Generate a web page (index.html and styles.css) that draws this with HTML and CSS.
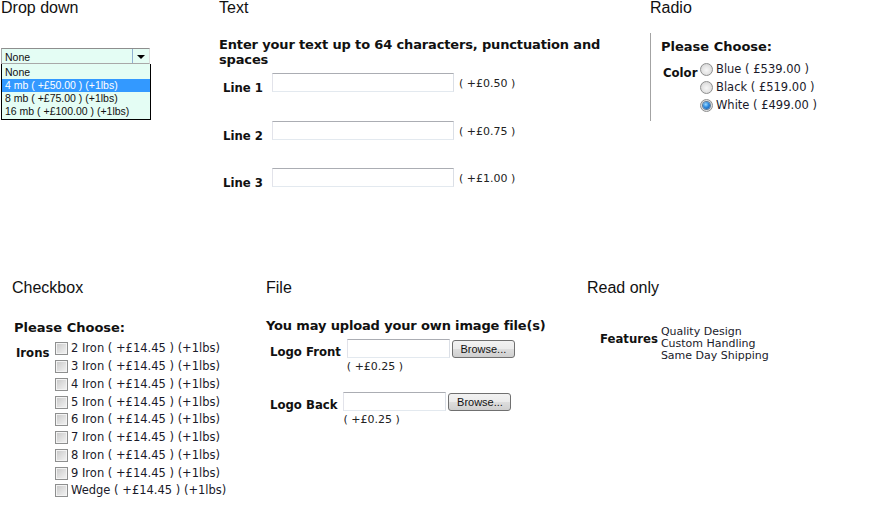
FILE: index.html
```html
<!DOCTYPE html>
<html lang="en">
<head>
<meta charset="utf-8">
<title>Product options</title>
<link rel="stylesheet" href="styles.css">
</head>
<body>
<div class="page">
  <div class="row row-top">
    <section class="col col-dd">
      <h2 class="title">Drop down</h2>
      <div class="select">
        <span class="select-value">None</span>
        <span class="select-btn"><span class="caret"></span></span>
      </div>
      <ul class="listbox">
        <li>None</li>
        <li class="active">4 mb ( +£50.00 ) (+1lbs)</li>
        <li>8 mb ( +£75.00 ) (+1lbs)</li>
        <li>16 mb ( +£100.00 ) (+1lbs)</li>
      </ul>
    </section>

    <section class="col col-text">
      <h2 class="title">Text</h2>
      <p class="intro">Enter your text up to 64 characters, punctuation and spaces</p>
      <div class="lines">
        <div class="line-row"><label class="lbl lbl-line">Line 1</label><input class="tin" type="text"><span class="price">( +£0.50 )</span></div>
        <div class="line-row"><label class="lbl lbl-line">Line 2</label><input class="tin" type="text"><span class="price">( +£0.75 )</span></div>
        <div class="line-row"><label class="lbl lbl-line">Line 3</label><input class="tin" type="text"><span class="price">( +£1.00 )</span></div>
      </div>
    </section>

    <section class="col col-radio">
      <h2 class="title">Radio</h2>
      <div class="radio-box">
        <p class="choose">Please Choose:</p>
        <div class="opt-field">
          <span class="lbl lbl-color">Color</span>
          <div class="opt-list">
            <div class="opt"><span class="radio"></span>Blue ( £539.00 )</div>
            <div class="opt"><span class="radio"></span>Black ( £519.00 )</div>
            <div class="opt"><span class="radio checked"></span>White ( £499.00 )</div>
          </div>
        </div>
      </div>
    </section>
  </div>

  <div class="row row-bottom">
    <section class="col col-check">
      <h2 class="title">Checkbox</h2>
      <p class="choose choose-check">Please Choose:</p>
      <div class="check-field">
        <span class="lbl lbl-irons">Irons</span>
        <div class="chk-list">
          <div class="chk-row"><span class="chk"></span>2 Iron ( +£14.45 ) (+1lbs)</div>
          <div class="chk-row"><span class="chk"></span>3 Iron ( +£14.45 ) (+1lbs)</div>
          <div class="chk-row"><span class="chk"></span>4 Iron ( +£14.45 ) (+1lbs)</div>
          <div class="chk-row"><span class="chk"></span>5 Iron ( +£14.45 ) (+1lbs)</div>
          <div class="chk-row"><span class="chk"></span>6 Iron ( +£14.45 ) (+1lbs)</div>
          <div class="chk-row"><span class="chk"></span>7 Iron ( +£14.45 ) (+1lbs)</div>
          <div class="chk-row"><span class="chk"></span>8 Iron ( +£14.45 ) (+1lbs)</div>
          <div class="chk-row"><span class="chk"></span>9 Iron ( +£14.45 ) (+1lbs)</div>
          <div class="chk-row"><span class="chk"></span>Wedge ( +£14.45 ) (+1lbs)</div>
        </div>
      </div>
    </section>

    <section class="col col-file">
      <h2 class="title">File</h2>
      <p class="intro intro-file">You may upload your own image file(s)</p>
      <div class="file-row">
        <span class="lbl lbl-file">Logo Front</span>
        <div class="file-ctrl">
          <div class="file-inputs"><span class="fin"></span><span class="browse">Browse...</span></div>
          <span class="price price-file">( +£0.25 )</span>
        </div>
      </div>
      <div class="file-row file-row-2">
        <span class="lbl lbl-file">Logo Back</span>
        <div class="file-ctrl">
          <div class="file-inputs"><span class="fin"></span><span class="browse">Browse...</span></div>
          <span class="price price-file">( +£0.25 )</span>
        </div>
      </div>
    </section>

    <section class="col col-ro">
      <h2 class="title">Read only</h2>
      <div class="ro-field">
        <span class="lbl lbl-feat">Features</span>
        <div class="ro-lines">
          <div>Quality Design</div>
          <div>Custom Handling</div>
          <div>Same Day Shipping</div>
        </div>
      </div>
    </section>
  </div>
</div>
</body>
</html>
```

FILE: styles.css
```css
* { box-sizing: border-box; }

body {
  margin: 0;
  background: #fff;
  color: #151515;
  font-family: "DejaVu Sans", Verdana, sans-serif;
}

.row { display: flex; }
.row-top { height: 280px; }
.row-bottom { padding-left: 12px; }

.title {
  margin: 0;
  font: 400 16px/16px "Liberation Sans", Arial, sans-serif;
  color: #111;
}

.col-dd { width: 218px; margin-left: 1px; }
.col-text { width: 431px; }
.col-radio { flex: 1; }
.col-check { width: 254px; }
.col-file { width: 321px; }
.col-ro { flex: 1; }

/* labels (narrow bold) */
.lbl {
  font-family: "DejaVu Sans Condensed", "DejaVu Sans", sans-serif;
  font-stretch: condensed;
  font-weight: 700;
  font-size: 13px;
  line-height: 15px;
  color: #111;
  white-space: nowrap;
}

/* drop down */
.select {
  margin-top: 32px;
  width: 149px;
  height: 16px;
  display: flex;
  background: #e4fdf4;
  border: 1px solid #a8a8a8;
  border-top-color: #8e8e8e;
  border-right-color: #dcdcdc;
}
.select-value {
  flex: 1;
  padding: 1px 0 0 3px;
  font: 10.5px/14px "Liberation Sans", Arial, sans-serif;
  color: #111;
}
.select-btn {
  width: 17px;
  border-left: 1px solid #8fb0d2;
  display: flex;
  align-items: center;
  justify-content: center;
  padding-top: 2px;
}
.caret {
  width: 0;
  height: 0;
  border-left: 4px solid transparent;
  border-right: 4px solid transparent;
  border-top: 4px solid #000;
}
.listbox {
  list-style: none;
  margin: 0;
  padding: 2px 0 1px;
  width: 150px;
  background: #e4fdf4;
  border: 1px solid #000;
  border-top: 0;
  font: 10.5px/13px "Liberation Sans", Arial, sans-serif;
  color: #111;
}
.listbox li { height: 13px; padding-left: 3px; white-space: nowrap; }
.listbox li.active { background: #3399ff; color: #fff; }

/* text */
.intro {
  margin: 21px 0 0;
  width: 420px;
  font: 700 13px/15px "DejaVu Sans", Verdana, sans-serif;
  letter-spacing: -0.15px;
  color: #111;
}
.lines {
  margin-top: 6px;
  display: flex;
  flex-direction: column;
  gap: 25.5px;
}
.line-row { display: flex; align-items: flex-start; }
.lbl-line { margin: 7px 9px 0 4px; }
.tin {
  width: 182px;
  height: 19px;
  margin: 0;
  padding: 0;
  background: #fff;
  border: 1px solid;
  border-color: #abadb3 #dbdfe6 #e3e9ef #e2e3ea;
}
.price {
  margin: 4px 0 0 5px;
  font: 11px/13px "DejaVu Sans", Verdana, sans-serif;
  color: #222;
  white-space: nowrap;
}

/* radio */
.radio-box {
  margin-top: 17px;
  height: 88px;
  border-left: 1px solid #a3a3a3;
  padding: 6px 0 0 10px;
}
.choose {
  margin: 0;
  font: 700 13px/15px "DejaVu Sans", Verdana, sans-serif;
  color: #111;
}
.opt-field { display: flex; margin-top: 6px; }
.lbl-color { margin: 5px 0 0 2px; width: 37px; }
.opt-list { display: flex; flex-direction: column; }
.opt {
  display: flex;
  align-items: center;
  height: 18px;
  font: 11.5px/13px "DejaVu Sans", Verdana, sans-serif;
  color: #1a1a2a;
  white-space: nowrap;
}
.radio {
  flex: none;
  width: 13px;
  height: 13px;
  margin-right: 3px;
  border-radius: 50%;
  border: 1px solid #8e8f8f;
  background: radial-gradient(circle at 50% 55%, #f6f6f6 0%, #e6e6e6 45%, #cdcdcd 100%);
  display: flex;
  align-items: center;
  justify-content: center;
}
.radio.checked::after {
  content: "";
  width: 7px;
  height: 7px;
  border-radius: 50%;
  background: radial-gradient(circle at 40% 35%, #9fdcff 0%, #2f8be0 45%, #0b4a9a 100%);
  box-shadow: 0 0 0 1px #5c7c9c;
}

/* checkbox */
.choose-check { margin-top: 24px; padding-left: 2px; }
.check-field { display: flex; margin-top: 5px; }
.lbl-irons { margin: 5px 0 0 4px; width: 39px; }
.chk-list { display: flex; flex-direction: column; }
.chk-row {
  display: flex;
  align-items: center;
  height: 17.75px;
  font: 11.5px/13px "DejaVu Sans", Verdana, sans-serif;
  color: #1a1a2a;
  white-space: nowrap;
}
.chk {
  flex: none;
  width: 13px;
  height: 13px;
  margin-right: 3px;
  border: 1px solid #8e8f8f;
  background: linear-gradient(135deg, #c6c6c6 0%, #dedede 50%, #f4f4f4 100%);
  box-shadow: inset 0 0 0 1px #f3f3f3;
}

/* file */
.intro-file { margin-top: 22px; width: auto; }
.file-row { display: flex; align-items: flex-start; margin-top: 6px; }
.file-row-2 { margin-top: 19px; }
.lbl-file { margin: 5px 6px 0 4px; }
.file-ctrl { display: flex; flex-direction: column; }
.file-inputs { display: flex; gap: 2px; align-items: flex-start; }
.fin {
  display: block;
  width: 103px;
  height: 19px;
  background: #fff;
  border: 1px solid;
  border-color: #abadb3 #dbdfe6 #e3e9ef #e2e3ea;
}
.browse {
  display: flex;
  align-items: center;
  justify-content: center;
  width: 63px;
  height: 18px;
  margin-top: 1px;
  border: 1px solid #707070;
  border-radius: 3px;
  background: linear-gradient(#f2f2f2 0%, #ebebeb 48%, #dddddd 52%, #cfcfcf 100%);
  font: 11px/1 "Liberation Sans", Arial, sans-serif;
  color: #111;
}
.price-file { margin: 2px 0 0 0; }

/* read only */
.ro-field { display: flex; margin-top: 30px; padding-left: 13px; }
.lbl-feat { margin: 5px 3px 0 0; }
.ro-lines {
  font: 11px/12px "DejaVu Sans", Verdana, sans-serif;
  color: #1a1a2a;
  white-space: nowrap;
}
```
